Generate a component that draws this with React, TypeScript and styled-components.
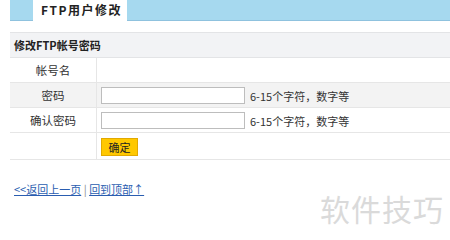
import React from "react";
import styled, { createGlobalStyle } from "styled-components";

const GlobalStyle = createGlobalStyle`
  html, body {
    margin: 0;
    padding: 0;
    background: #fff;
    font-family: "Noto Sans CJK SC", "Liberation Sans", sans-serif;
  }
`;

const Page = styled.div`
  position: relative;
  width: 450px;
  height: 240px;
  overflow: hidden;
  padding-left: 10px;
  box-sizing: border-box;
`;

const TabBar = styled.div`
  display: flex;
  height: 20px;
  padding-left: 23px;
  background: #a6d9ef;
  border-bottom: 1px solid #8fc2de;
`;

const Tab = styled.div`
  width: 94px;
  height: 21px;
  background: #fff;
  font-size: 12px;
  font-weight: bold;
  letter-spacing: 1.5px;
  color: #222;
  line-height: 20px;
  padding-left: 8px;
  box-sizing: border-box;
`;

const FormTable = styled.table`
  margin-top: 11px;
  width: 440px;
  border-collapse: collapse;
  font-size: 11px;
  color: #333;
`;

const HeadCell = styled.th`
  height: 24px;
  padding: 0 0 0 4px;
  text-align: left;
  font-size: 11px;
  font-weight: bold;
  color: #222;
  background: #f2f3f5;
  border-top: 1px solid #e3e4e6;
  border-bottom: 1px solid #e3e4e6;
`;

const Row = styled.tr<{ $shaded?: boolean; $tall?: boolean }>`
  height: ${(p) => (p.$tall ? "27px" : "25px")};
  background: ${(p) => (p.$shaded ? "#f3f3f3" : "#fff")};
  border-bottom: 1px solid #e6e6e6;
`;

const LabelCell = styled.td`
  width: 86px;
  padding: 0;
  text-align: center;
  font-size: 11.5px;
  color: #333;
  border-right: 1px solid #e6e6e6;
`;

const FieldCell = styled.td`
  padding: 0 0 0 4px;
  white-space: nowrap;
`;

const TextInput = styled.input`
  width: 144px;
  height: 17px;
  box-sizing: border-box;
  border: 1px solid #bdbdbd;
  background: #fff;
  padding: 0 2px;
  margin: 0 5px 0 0;
  vertical-align: middle;
`;

const Hint = styled.span`
  font-size: 11px;
  color: #333;
  vertical-align: middle;
`;

const SubmitButton = styled.button`
  width: 37px;
  height: 18px;
  padding: 0;
  margin-top: 1px;
  background: #ffc800;
  border: 1px solid #e2a900;
  font-family: inherit;
  font-size: 11px;
  color: #222;
  vertical-align: middle;
`;

const LinkLine = styled.div`
  margin-top: 21px;
  padding-left: 4px;
  font-size: 11px;
  color: #888;
  a {
    color: #2a5db0;
    text-decoration: underline;
  }
`;

const Watermark = styled.div`
  position: absolute;
  left: 320px;
  top: 193px;
  font-size: 30px;
  line-height: 1;
  letter-spacing: 1px;
  color: #dadada;
  font-family: "Noto Sans CJK SC", sans-serif;
`;

const App = () => {
  return (
    <>
      <GlobalStyle />
      <Page>
        <TabBar>
          <Tab>FTP用户修改</Tab>
        </TabBar>
        <FormTable>
          <thead>
            <tr>
              <HeadCell colSpan={2}>修改FTP帐号密码</HeadCell>
            </tr>
          </thead>
          <tbody>
            <Row>
              <LabelCell>帐号名</LabelCell>
              <FieldCell></FieldCell>
            </Row>
            <Row $shaded>
              <LabelCell>密码</LabelCell>
              <FieldCell>
                <TextInput type="password" />
                <Hint>6-15个字符，数字等</Hint>
              </FieldCell>
            </Row>
            <Row>
              <LabelCell>确认密码</LabelCell>
              <FieldCell>
                <TextInput type="password" />
                <Hint>6-15个字符，数字等</Hint>
              </FieldCell>
            </Row>
            <Row $tall>
              <LabelCell></LabelCell>
              <FieldCell>
                <SubmitButton>确定</SubmitButton>
              </FieldCell>
            </Row>
          </tbody>
        </FormTable>
        <LinkLine>
          <a href="#">&lt;&lt;返回上一页</a> | <a href="#">回到顶部↑</a>
        </LinkLine>
        <Watermark>软件技巧</Watermark>
      </Page>
    </>
  );
};

export default App;
